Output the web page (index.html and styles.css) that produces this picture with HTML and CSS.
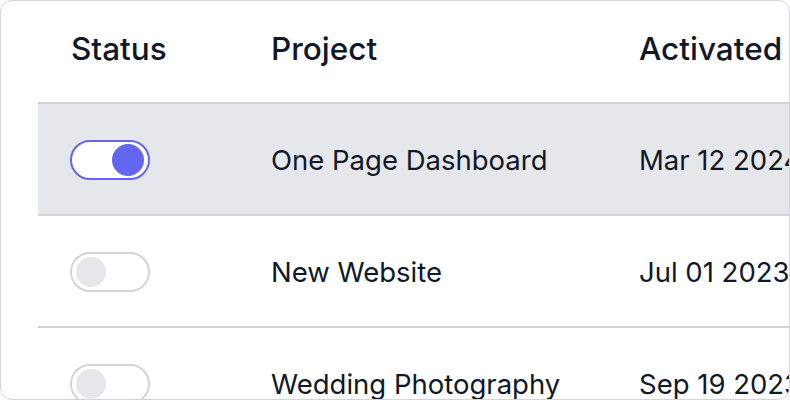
FILE: index.html
```html
<!DOCTYPE html>
<html lang="en">
<head>
    <meta charset="UTF-8">
    <meta name="viewport" content="width=device-width, initial-scale=1.0">
    <title>Projects</title>
    <link rel="stylesheet" href="styles.css">
</head>
<body>

<div class="card">
    <table class="projects">
        <colgroup>
            <col class="col-status">
            <col class="col-project">
            <col class="col-date">
        </colgroup>
        <thead>
            <tr>
                <th>Status</th>
                <th>Project</th>
                <th>Activated</th>
            </tr>
        </thead>
        <tbody>
            <tr class="selected">
                <td><span class="toggle on"><span class="knob"></span></span></td>
                <td>One Page Dashboard</td>
                <td>Mar 12 2024</td>
            </tr>
            <tr>
                <td><span class="toggle"><span class="knob"></span></span></td>
                <td>New Website</td>
                <td>Jul 01 2023</td>
            </tr>
            <tr>
                <td><span class="toggle"><span class="knob"></span></span></td>
                <td>Wedding Photography</td>
                <td>Sep 19 2023</td>
            </tr>
        </tbody>
    </table>
</div>

</body>
</html>
```

FILE: styles.css
```css
* {
    margin: 0;
    padding: 0;
    box-sizing: border-box;
}
body {
    font-family: Inter, 'Noto Sans', sans-serif;
    background-color: #fff;
    color: #111827;
    width: 790px;
    height: 400px;
}
.card {
    width: 790px;
    height: 400px;
    border: 1px solid #d1d5db;
    border-radius: 12px;
    overflow: hidden;
    padding-left: 37px;
    background-color: #fff;
}
.projects {
    border-collapse: separate;
    border-spacing: 0;
    table-layout: fixed;
    width: 900px;
}
.col-status { width: 200px; }
.col-project { width: 368px; }
.col-date { width: 332px; }
th, td {
    text-align: left;
    padding-left: 33px;
    white-space: nowrap;
    border-bottom: 2px solid #d1d5db;
}
th {
    height: 103px;
    padding-bottom: 6px;
    font-size: 31.5px;
    font-weight: 500;
}
td {
    height: 112px;
    padding-top: 2px;
    font-size: 27.5px;
    font-weight: 400;
}
tr.selected td {
    background-color: #e5e7eb;
}
.toggle {
    display: flex;
    align-items: center;
    width: 80px;
    height: 40px;
    margin-left: -1px;
    padding: 0 4px;
    border: 2px solid #d1d5db;
    border-radius: 20px;
    background-color: #fff;
}
.knob {
    width: 30px;
    height: 30px;
    border-radius: 50%;
    background-color: #e5e7eb;
}
.toggle.on {
    border-color: #6366f1;
    justify-content: flex-end;
}
.toggle.on .knob {
    width: 32px;
    height: 32px;
    background-color: #6366f1;
}
```
